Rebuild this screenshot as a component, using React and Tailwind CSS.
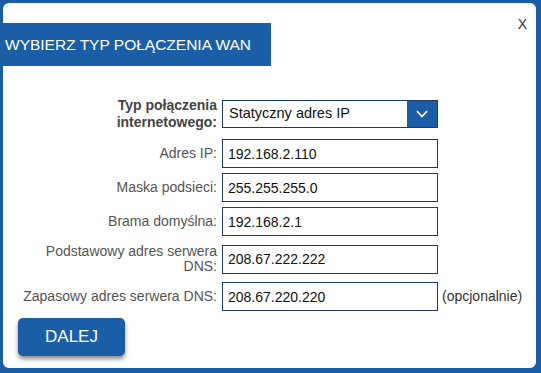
import { useState } from "react";

const FIELDS = [
  { label: "Adres IP:", value: "192.168.2.110", mt: "mt-[8px]" },
  { label: "Maska podsieci:", value: "255.255.255.0", mt: "mt-[5px]" },
  { label: "Brama domyślna:", value: "192.168.2.1", mt: "mt-[5px]" },
  { label: ["Podstawowy adres serwera", "DNS:"], value: "208.67.222.222", mt: "mt-[8px]" },
  { label: "Zapasowy adres serwera DNS:", value: "208.67.220.220", mt: "mt-[8px]", note: "(opcjonalnie)" },
];

function Chevron() {
  return (
    <svg width="12" height="8" viewBox="0 0 12 8" fill="none">
      <path d="M1 1.2 6 6.5 11 1.2" stroke="white" strokeWidth="1.7" />
    </svg>
  );
}

export default function App() {
  const [values, setValues] = useState(FIELDS.map((f) => f.value));

  return (
    <div className="w-[541px] h-[373px] bg-[#1a5ea8] pt-[3px] pl-[3px] pr-[5px] pb-[5px] font-['Liberation_Sans',Arial,sans-serif]">
      <div className="relative flow-root h-full bg-white rounded-[6px]">
        <button className="absolute top-[13px] right-[9px] text-[14px] leading-[16px] text-[#333]">X</button>

        <div className="mt-[20px] -ml-[3px] w-[271px] h-[43px] bg-[#1a5ea8] flex items-center pl-[5px] pt-[1px] text-white text-[15.5px]">
          WYBIERZ TYP POŁĄCZENIA WAN
        </div>

        <div className="pl-[17px] mt-[31px]">
          <div className="flex items-center gap-[5px]">
            <div className="w-[197px] text-right font-bold text-[14px] leading-[17px] text-[#444]">
              Typ połączenia
              <br />
              internetowego:
            </div>
            <div className="w-[216px] h-[28px] border border-[#1f3a68] flex items-center">
              <span className="flex-1 pl-[6px] text-[14.5px] text-[#111]">Statyczny adres IP</span>
              <span className="w-[30px] h-full bg-[#1a5ea8] flex items-center justify-center">
                <Chevron />
              </span>
            </div>
          </div>

          {FIELDS.map((f, i) => (
            <div key={i} className={`flex items-center gap-[5px] ${f.mt}`}>
              <div className="w-[197px] text-right text-[14px] leading-[15px] text-[#555]">
                {Array.isArray(f.label) ? (
                  <>
                    {f.label[0]}
                    <br />
                    {f.label[1]}
                  </>
                ) : (
                  f.label
                )}
              </div>
              <input
                value={values[i]}
                onChange={(e) => setValues(values.map((v, j) => (j === i ? e.target.value : v)))}
                className="w-[216px] h-[29px] border border-[#1f3a68] pl-[5px] text-[14px] text-[#111] outline-none"
              />
              {f.note && <span className="ml-[-1px] text-[14px] text-[#333]">{f.note}</span>}
            </div>
          ))}
        </div>

        <button className="mt-[7px] ml-[15px] w-[107px] h-[38px] rounded-[5px] bg-[#1a5ea8] text-white text-[17px] shadow-[0_3px_4px_rgba(0,0,0,0.45)]">
          DALEJ
        </button>
      </div>
    </div>
  );
}
